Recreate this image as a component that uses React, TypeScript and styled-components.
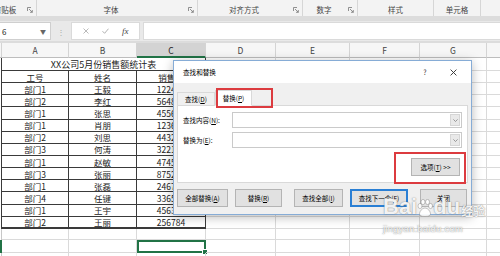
import React from 'react'
import styled, { createGlobalStyle } from 'styled-components'

const GlobalStyle = createGlobalStyle`
  html, body { margin: 0; padding: 0; background: #fff; }
  body { font-family: "Noto Sans CJK SC", "Noto Sans", sans-serif; }
`

const Screen = styled.div`
  position: relative;
  width: 500px;
  height: 256px;
  overflow: hidden;
  background: #fff;
`

/* ---------- ribbon ---------- */

const Ribbon = styled.div`
  display: flex;
  height: 16px;
  background: #f3f3f3;
`

const Group = styled.div<{ $w: number; $shift?: number }>`
  flex: 0 0 ${p => p.$w}px;
  margin-left: ${p => p.$shift || 0}px;
  display: flex;
  align-items: center;
  box-sizing: border-box;
  border-right: 1px solid #d6d6d6;
`

const GroupLabel = styled.span`
  flex: 1;
  text-align: center;
  font-size: 7.5px;
  color: #444;
  white-space: nowrap;
  padding-top: 2px;
`

const Launcher = styled.span`
  flex: 0 0 12px;
  display: flex;
  justify-content: center;
  padding-top: 4px;
`

const LauncherIcon = () => (
  <svg width="6" height="6" viewBox="0 0 6 6">
    <path d="M0.5 4V0.5H4" fill="none" stroke="#777" strokeWidth="0.8" />
    <path d="M2 2L5.3 5.3M5.3 3V5.3H3" fill="none" stroke="#777" strokeWidth="0.8" />
  </svg>
)

const Band = styled.div<{ $h: number }>`
  height: ${p => p.$h}px;
  background: #dcdcdc;
`

/* ---------- formula bar ---------- */

const FormulaBar = styled.div`
  display: flex;
  align-items: center;
  height: 20px;
  background: #e9e9e9;
`

const NameBox = styled.div`
  flex: 0 0 51px;
  height: 18px;
  box-sizing: border-box;
  background: #fff;
  border: 1px solid #cfcfcf;
  border-left: none;
  display: flex;
  align-items: center;
  justify-content: space-between;
  padding: 0 4px 0 2px;
  font-size: 8px;
  color: #222;
`

const Caret = styled.span`
  font-size: 6px;
  color: #666;
`

const Grip = styled.div`
  flex: 0 0 20px;
  text-align: center;
  font-size: 8px;
  color: #aaa;
`

const FxBox = styled.div`
  flex: 0 0 69px;
  height: 18px;
  box-sizing: border-box;
  background: #fff;
  border: 1px solid #dadada;
  display: flex;
  align-items: center;
  justify-content: space-around;
  padding: 0 4px;
`

const Fx = styled.span`
  font-family: "Liberation Serif", serif;
  font-style: italic;
  font-size: 9px;
  color: #444;
`

const FormulaInput = styled.div`
  flex: 1;
  height: 18px;
  margin-left: 3px;
  background: #fff;
  border: 1px solid #dadada;
  border-right: none;
  box-sizing: border-box;
`

/* ---------- sheet ---------- */

const COLS = [67, 68, 69, 70, 74, 70, 67, 40]
const LETTERS = ['A', 'B', 'C', 'D', 'E', 'F', 'G', '']

const HeaderRow = styled.div`
  display: flex;
  height: 15px;
  background: #f6f6f6;
`

const HeaderCell = styled.div<{ $w: number; $active?: boolean }>`
  flex: 0 0 ${p => p.$w}px;
  box-sizing: border-box;
  display: flex;
  align-items: center;
  justify-content: center;
  font-size: 8.5px;
  color: ${p => (p.$active ? '#222' : '#444')};
  background: ${p => (p.$active ? '#d3d3d3' : 'transparent')};
  border-right: 1px solid #d4d4d4;
  border-bottom: ${p => (p.$active ? '2px solid #217346' : '1px solid #bdbdbd')};
`

const GridRow = styled.div<{ $h: number }>`
  display: flex;
  height: ${p => p.$h}px;
`

const Stub = styled.div<{ $tone: 'dark' | 'light' | 'green' }>`
  flex: 0 0 2px;
  box-sizing: border-box;
  border-right: ${p =>
    p.$tone === 'green' ? '2px solid #217346' : p.$tone === 'dark' ? '1px solid #3a3a3a' : '1px solid #c8c8c8'};
`

const Cell = styled.div<{ $w: number; $boxed?: boolean; $heavy?: boolean; $size?: number }>`
  position: relative;
  flex: 0 0 ${p => p.$w}px;
  box-sizing: border-box;
  display: flex;
  align-items: center;
  justify-content: center;
  font-size: ${p => p.$size || 8.5}px;
  color: #222;
  white-space: nowrap;
  overflow: hidden;
  border-right: 1px solid ${p => (p.$boxed ? '#3a3a3a' : '#dadada')};
  border-bottom: ${p => (p.$heavy ? '2px solid #3a3a3a' : p.$boxed ? '1px solid #3a3a3a' : '1px solid #dadada')};
`

const ActiveCell = styled(Cell)`
  overflow: visible;
  outline: 2px solid #217346;
  outline-offset: -2px;
`

const FillHandle = styled.span`
  position: absolute;
  right: -3px;
  bottom: -3px;
  width: 4px;
  height: 4px;
  background: #217346;
  border: 1px solid #fff;
`

/* ---------- dialog ---------- */

const Dialog = styled.div`
  position: absolute;
  left: 173px;
  top: 60px;
  width: 299px;
  height: 155px;
  box-sizing: border-box;
  border: 1px solid #86acd6;
  box-shadow: 0 2px 10px rgba(0, 0, 0, 0.28);
  display: flex;
  flex-direction: column;
  background: #f0f0f0;
  font-size: 6.5px;
  color: #000;
`

const TitleBar = styled.div`
  flex: 0 0 22px;
  display: flex;
  align-items: center;
  background: #fff;
  padding: 0 10px 0 9px;
`

const Title = styled.span`
  flex: 1;
  font-size: 6.6px;
`

const TitleTool = styled.span`
  width: 16px;
  display: flex;
  justify-content: center;
  margin-left: 12px;
  font-size: 7px;
  color: #333;
`

const Body = styled.div`
  flex: 1;
  display: flex;
  flex-direction: column;
  padding: 0 3px;
`

const TabStrip = styled.div`
  flex: 0 0 22px;
  display: flex;
  align-items: flex-end;
`

const Tab = styled.div<{ $selected?: boolean }>`
  position: relative;
  z-index: ${p => (p.$selected ? 1 : 0)};
  width: ${p => (p.$selected ? 37 : 38)}px;
  height: ${p => (p.$selected ? 16 : 13)}px;
  box-sizing: border-box;
  display: flex;
  align-items: center;
  justify-content: center;
  background: ${p => (p.$selected ? '#fff' : '#f0f0f0')};
  border: 1px solid #d9d9d9;
  border-bottom: ${p => (p.$selected ? '1px solid #fff' : 'none')};
  margin-bottom: ${p => (p.$selected ? -1 : 0)}px;
`

const TabPage = styled.div`
  flex: 0 0 78px;
  box-sizing: border-box;
  background: #fff;
  border: 1px solid #d9d9d9;
  padding: 6px 5px 0 5px;
  display: flex;
  flex-direction: column;
  gap: 4px;
`

const FieldRow = styled.div`
  display: flex;
  align-items: center;
  height: 16px;
`

const FieldLabel = styled.span`
  flex: 0 0 49px;
`

const Combo = styled.div`
  flex: 1;
  height: 16px;
  box-sizing: border-box;
  border: 1px solid #cacaca;
  background: #fff;
  display: flex;
  justify-content: flex-end;
  padding: 1px;
`

const ComboButton = styled.span`
  width: 10px;
  background: #e9e9e9;
  border: 1px solid #d6d6d6;
  box-sizing: border-box;
  display: flex;
  align-items: center;
  justify-content: center;
`

const OptionsRow = styled.div`
  display: flex;
  justify-content: flex-end;
  padding: 6px 2px 0 0;
`

const Button = styled.div<{ $w: number; $primary?: boolean }>`
  flex: 0 0 ${p => p.$w}px;
  height: 18px;
  box-sizing: border-box;
  display: flex;
  align-items: center;
  justify-content: center;
  white-space: nowrap;
  background: #e1e1e1;
  border: 1px solid ${p => (p.$primary ? '#2a7fd4' : '#b4b4b4')};
  box-shadow: ${p => (p.$primary ? 'inset 0 0 0 1px #2a7fd4' : 'none')};
`

const ButtonBar = styled.div`
  flex: 1;
  display: flex;
  align-items: center;
  padding-bottom: 1px;
`

const Spacer = styled.span<{ $w: number }>`
  flex: 0 0 ${p => p.$w}px;
`

const Mark = styled.div<{ $l: number; $t: number; $w: number; $h: number }>`
  position: absolute;
  left: ${p => p.$l}px;
  top: ${p => p.$t}px;
  width: ${p => p.$w}px;
  height: ${p => p.$h}px;
  box-sizing: border-box;
  border: 2px solid #dc3b3f;
  z-index: 2;
  pointer-events: none;
`

/* ---------- watermark ---------- */

const Watermark = styled.div`
  position: absolute;
  left: 383px;
  top: 192px;
  color: rgba(255, 255, 255, 0.92);
  text-shadow: 0 0 1px rgba(90, 90, 90, 0.7), 0 0 2px rgba(120, 120, 120, 0.35);
  font-family: "Liberation Sans", Arial, sans-serif;
  z-index: 3;
  pointer-events: none;
`

const MarkLine = styled.div`
  display: flex;
  align-items: flex-end;
  height: 26px;
`

const Brand = styled.span`
  font-size: 22px;
  font-weight: 700;
  line-height: 1;
`

const BrandCn = styled.span`
  font-family: "Noto Sans CJK SC", sans-serif;
  font-size: 12px;
  font-weight: 700;
  margin-left: 1px;
  line-height: 1.2;
`

const Domain = styled.div`
  font-size: 9.5px;
  margin-top: 5px;
  letter-spacing: 0.2px;
`

const Paw = () => (
  <svg width="16" height="18" viewBox="0 0 16 18" style={{ marginBottom: 1 }}>
    <g fill="rgba(255,255,255,0.92)" stroke="rgba(100,100,100,0.6)" strokeWidth="0.6">
      <ellipse cx="3" cy="7" rx="2" ry="2.6" />
      <ellipse cx="6" cy="3" rx="2" ry="2.6" />
      <ellipse cx="10.5" cy="3" rx="2" ry="2.6" />
      <ellipse cx="13.5" cy="7" rx="2" ry="2.6" />
      <path d="M8 9c-3 0-5.5 3.5-5.5 5.8 0 2 2 2.5 5.5 2.5s5.5-.5 5.5-2.5C13.5 12.5 11 9 8 9z" />
    </g>
  </svg>
)

/* ---------- data ---------- */

const rows = [
  ['部门1', '王毅', '122456'],
  ['部门2', '李红', '564832'],
  ['部门1', '张思', '455612'],
  ['部门1', '肖朋', '123698'],
  ['部门2', '刘思', '443257'],
  ['部门3', '何涛', '322147'],
  ['部门1', '赵敏', '474589'],
  ['部门3', '张丽', '875214'],
  ['部门1', '张磊', '246785'],
  ['部门4', '任键', '336524'],
  ['部门1', '王宇', '456321'],
  ['部门2', '王丽', '256784'],
]

const groups = [
  { w: 51, shift: -14, label: '剪贴板', launcher: true },
  { w: 161, label: '字体', launcher: true },
  { w: 105, label: '对齐方式', launcher: true },
  { w: 55, label: '数字', launcher: true },
  { w: 76, label: '样式' },
  { w: 47, label: '单元格' },
  { w: 30, label: '' },
]

const Key = ({ k }: { k: string }) => (
  <>
    (<u>{k}</u>)
  </>
)

const Check = () => (
  <svg width="7" height="6" viewBox="0 0 7 6">
    <path d="M0.5 3.2L2.6 5.3L6.5 0.7" fill="none" stroke="#a8a8a8" strokeWidth="0.9" />
  </svg>
)

const Cross = ({ color = '#a8a8a8', size = 6 }: { color?: string; size?: number }) => (
  <svg width={size} height={size} viewBox="0 0 6 6">
    <path d="M0.5 0.5L5.5 5.5M5.5 0.5L0.5 5.5" fill="none" stroke={color} strokeWidth="0.8" />
  </svg>
)

const Chevron = () => (
  <svg width="5" height="3" viewBox="0 0 5 3">
    <path d="M0.4 0.4L2.5 2.5L4.6 0.4" fill="none" stroke="#777" strokeWidth="0.7" />
  </svg>
)

const EmptyRest = ({ from, tone = false }: { from: number; tone?: boolean }) => (
  <>
    {COLS.slice(from).map((w, i) => (
      <Cell key={i} $w={w} $boxed={tone} />
    ))}
  </>
)

const ROW_H = 12.15

const App: React.FC = () => {
  return (
    <Screen>
      <GlobalStyle />
      <Ribbon>
        {groups.map((g, i) => (
          <Group key={i} $w={g.w} $shift={g.shift}>
            <GroupLabel>{g.label}</GroupLabel>
            {g.launcher && (
              <Launcher>
                <LauncherIcon />
              </Launcher>
            )}
          </Group>
        ))}
      </Ribbon>
      <Band $h={5} />
      <FormulaBar>
        <NameBox>
          <span>6</span>
          <Caret>▼</Caret>
        </NameBox>
        <Grip>⋮</Grip>
        <FxBox>
          <Cross />
          <Check />
          <Fx>fx</Fx>
        </FxBox>
        <FormulaInput />
      </FormulaBar>
      <Band $h={2} />

      <HeaderRow>
        <HeaderCell $w={2} />
        {COLS.map((w, i) => (
          <HeaderCell key={i} $w={w} $active={i === 2}>
            {LETTERS[i]}
          </HeaderCell>
        ))}
      </HeaderRow>

      <GridRow $h={13}>
        <Stub $tone="dark" />
        <Cell $w={204} $boxed $size={9}>
          XX公司5月份销售额统计表
        </Cell>
        <EmptyRest from={3} />
      </GridRow>

      <GridRow $h={ROW_H}>
        <Stub $tone="dark" />
        <Cell $w={COLS[0]} $boxed>工号</Cell>
        <Cell $w={COLS[1]} $boxed>姓名</Cell>
        <Cell $w={COLS[2]} $boxed>销售额</Cell>
        <EmptyRest from={3} />
      </GridRow>

      {rows.map((r, i) => {
        const last = i === rows.length - 1
        return (
          <GridRow key={i} $h={ROW_H}>
            <Stub $tone="dark" />
            <Cell $w={COLS[0]} $boxed $heavy={last}>{r[0]}</Cell>
            <Cell $w={COLS[1]} $boxed $heavy={last}>{r[1]}</Cell>
            <Cell $w={COLS[2]} $boxed $heavy={last}>{r[2]}</Cell>
            <EmptyRest from={3} />
          </GridRow>
        )
      })}

      <GridRow $h={11.5}>
        <Stub $tone="light" />
        <EmptyRest from={0} />
      </GridRow>
      <GridRow $h={12.5}>
        <Stub $tone="green" />
        <Cell $w={COLS[0]} />
        <Cell $w={COLS[1]} />
        <ActiveCell $w={COLS[2]}>
          <FillHandle />
        </ActiveCell>
        <EmptyRest from={3} />
      </GridRow>
      <GridRow $h={12}>
        <Stub $tone="light" />
        <EmptyRest from={0} />
      </GridRow>

      <Dialog>
        <TitleBar>
          <Title>查找和替换</Title>
          <TitleTool>?</TitleTool>
          <TitleTool>
            <Cross color="#333" size={7} />
          </TitleTool>
        </TitleBar>
        <Body>
          <TabStrip>
            <Tab>
              查找<Key k="D" />
            </Tab>
            <Tab $selected>
              替换<Key k="P" />
            </Tab>
          </TabStrip>
          <TabPage>
            <FieldRow>
              <FieldLabel>
                查找内容<Key k="N" />:
              </FieldLabel>
              <Combo>
                <ComboButton>
                  <Chevron />
                </ComboButton>
              </Combo>
            </FieldRow>
            <FieldRow>
              <FieldLabel>
                替换为<Key k="E" />:
              </FieldLabel>
              <Combo>
                <ComboButton>
                  <Chevron />
                </ComboButton>
              </Combo>
            </FieldRow>
            <OptionsRow>
              <Button $w={49}>
                选项<Key k="T" />&nbsp;&gt;&gt;
              </Button>
            </OptionsRow>
          </TabPage>
          <ButtonBar>
            <Button $w={51}>
              全部替换<Key k="A" />
            </Button>
            <Spacer $w={7} />
            <Button $w={47}>
              替换<Key k="R" />
            </Button>
            <Spacer $w={12} />
            <Button $w={49}>
              查找全部<Key k="I" />
            </Button>
            <Spacer $w={7} />
            <Button $w={58} $primary>
              查找下一个<Key k="F" />
            </Button>
            <Spacer $w={12} />
            <Button $w={47}>关闭</Button>
          </ButtonBar>
        </Body>
        <Mark $l={42} $t={27} $w={57} $h={20} />
        <Mark $l={220} $t={91} $w={72} $h={32} />
      </Dialog>

      <Watermark>
        <MarkLine>
          <Brand>Bai</Brand>
          <Paw />
          <Brand>du</Brand>
          <BrandCn>经验</BrandCn>
        </MarkLine>
        <Domain>jingyan.baidu.com</Domain>
      </Watermark>
    </Screen>
  )
}

export default App
